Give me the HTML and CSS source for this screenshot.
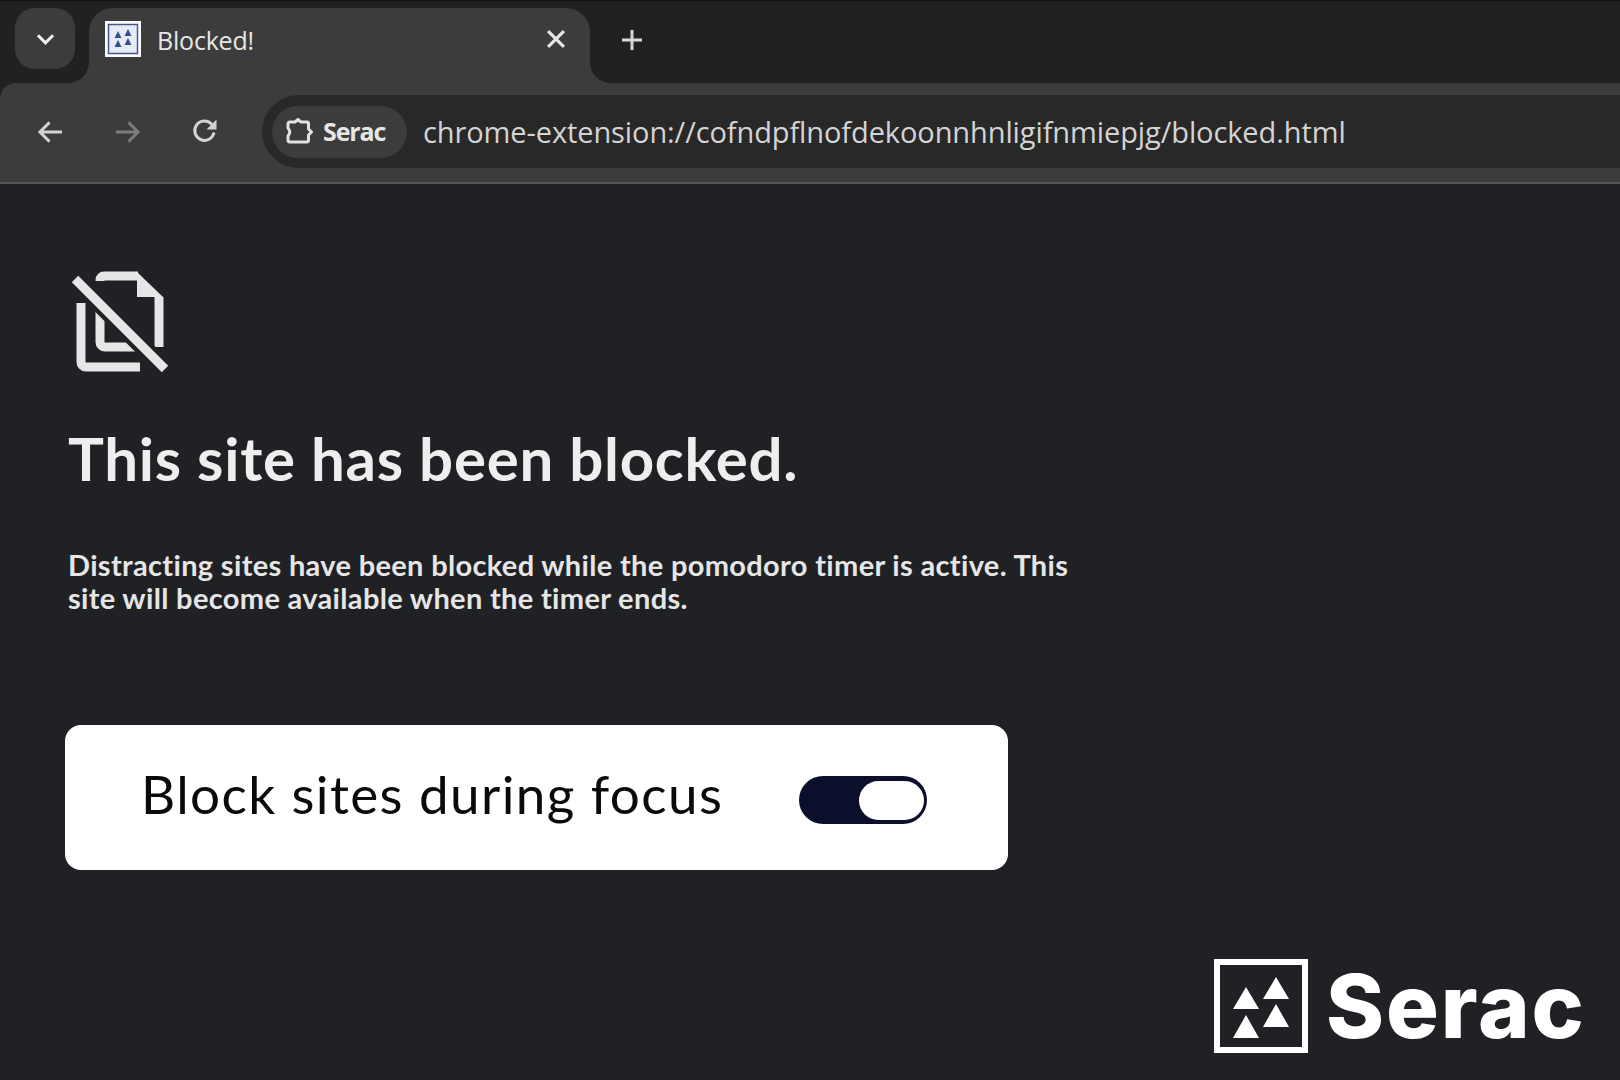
FILE: index.html
```html
<!DOCTYPE html>
<html lang="en">
<head>
<meta charset="utf-8">
<title>Blocked!</title>
<link rel="stylesheet" href="styles.css">
</head>
<body>
<header class="chrome">
  <div class="tabstrip">
    <div class="tab-search">
      <svg class="chev" viewBox="0 0 20 12"><path d="M2 2l8 8 8-8"/></svg>
    </div>
    <div class="tab">
      <svg class="favicon" viewBox="0 0 36 36">
        <rect width="36" height="36" fill="#fff"/>
        <rect x="3.5" y="3.500" width="29" height="29" fill="#e8ebf3" stroke="#44558f" stroke-width="1.500"/>
        <path d="M13 10l3.500 7h-7zM23 8l3.500 7h-7zM13 19l3.500 7h-7zM23 17l3.500 7h-7z" fill="#34508f"/>
      </svg>
      <span class="tab-title">Blocked!</span>
      <svg class="close" viewBox="0 0 16 16"><path d="M1 1l14 14M15 1L1 15"/></svg>
    </div>
    <svg class="plus" viewBox="0 0 22 22"><path d="M11 1v20M1 11h20"/></svg>
  </div>
  <div class="toolbar">
    <svg class="nav" viewBox="0 0 28 24"><path d="M26 12H3M13 2L3 12l10 10"/></svg>
    <svg class="nav nav-off" viewBox="0 0 28 24"><path d="M2 12h23M15 2l10 10-10 10"/></svg>
    <svg class="nav nav-reload" viewBox="0 0 28 28"><path d="M23 15.500A9.700 9.700 0 1 1 20.500 7L24 10.500"/><path class="fill" d="M25.500 2.500v10h-10z"/></svg>
    <div class="omnibox">
      <div class="chip">
        <svg class="puzzle" viewBox="0 0 30 30"><path d="M7 5h5l3-2.500L18 5h6a1.500 1.500 0 0 1 1.500 1.500V12l3 3-3 3v5.500A1.500 1.500 0 0 1 24 25H7a2 2 0 0 1-2-2v-4q3.500-4 0-8V7a2 2 0 0 1 2-2z"/></svg>
        <span class="chip-name">Serac</span>
      </div>
      <span class="url">chrome-extension://cofndpflnofdekoonnhnligifnmiepjg/blocked.html</span>
    </div>
  </div>
</header>
<main class="page">
  <svg class="block-icon" viewBox="0 0 100 110">
    <path class="doc-fill" d="M67 3l26 25H67z"/>
    <path class="doc" d="M30 12V11a4 4 0 0 1 4-4h34M89 28v50M30 38v35a5 5 0 0 0 5 5h32"/>
    <path class="doc" d="M11 34v59a5 5 0 0 0 5 5h54"/>
    <path class="slash-gap" d="M5 10l90 90"/>
    <path class="slash" d="M5 10l90 90"/>
  </svg>
  <h1 class="headline">This site has been blocked.</h1>
  <p class="message">Distracting sites have been blocked while the pomodoro timer is active. This site will become available when the timer ends.</p>
  <section class="card">
    <span class="card-label">Block sites during focus</span>
    <span class="toggle"><span class="knob"></span></span>
  </section>
</main>
<div class="brand">
  <svg class="brand-mark" viewBox="0 0 94 94">
    <rect x="3" y="3" width="88" height="88" fill="none" stroke="#fff" stroke-width="6"/>
    <path d="M62 18l13 22H49zM32 28l13 22H19zM62 45l13 23H49zM32 56l13 23H19z" fill="#fff"/>
  </svg>
  <span class="brand-name">Serac</span>
</div>
</body>
</html>
```
FILE: styles.css
```css
* { box-sizing: border-box; }
html, body { margin: 0; height: 100%; }
body {
  background: #202125;
  color: #e8e8e8;
  overflow: hidden;
  position: relative;
  font-family: "Open Sans", "Liberation Sans", sans-serif;
}
.chrome { display: flex; flex-direction: column; }
.tabstrip {
  height: 83px;
  background: #202221;
  border-top: 1px solid #111;
  padding: 7px 0 0 15px;
  display: flex;
  align-items: flex-start;
}
.tab-search {
  width: 60px;
  height: 61px;
  border-radius: 20px;
  background: #3c3c3c;
  display: flex;
  align-items: center;
  justify-content: center;
  margin-right: 14px;
}
.chev { width: 19px; height: 12px; fill: none; stroke: #f2f2f2; stroke-width: 3.200; }
.tab {
  position: relative;
  width: 501px;
  height: 75px;
  background: #3c3c3c;
  border-radius: 24px 24px 0 0;
  padding: 13px 26px 0 16px;
  display: flex;
  align-items: flex-start;
}
.tab::before, .tab::after {
  content: "";
  position: absolute;
  bottom: 0;
  width: 20px;
  height: 20px;
}
.tab::before { left: -20px; background: radial-gradient(circle at 0 0, transparent 19.500px, #3c3c3c 20px); }
.tab::after { right: -20px; background: radial-gradient(circle at 100% 0, transparent 19.500px, #3c3c3c 20px); }
.favicon { width: 36px; height: 36px; flex: none; }
.tab-title {
  margin-left: 16px;
  font-size: 25px;
  line-height: 38px;
  color: #e6e6e6;
  font-family: "Open Sans", sans-serif;
  letter-spacing: -0.2px;
  flex: 1;
}
.close { width: 18px; height: 18px; margin-top: 9px; margin-right: -1px; fill: none; stroke: #e6e6e6; stroke-width: 2.800; }
.plus { width: 22px; height: 22px; margin: 21px 0 0 31px; fill: none; stroke: #d8d8d8; stroke-width: 3; }
.toolbar {
  position: relative;
  height: 101px;
  background: #3c3c3c;
  border-bottom: 2px solid #555;
  border-radius: 16px 0 0 0;
  padding: 12px 0 14px 37px;
  display: flex;
  align-items: center;
}
.nav { width: 27px; height: 24px; flex: none; margin-right: 50px; fill: none; stroke: #d4d4d4; stroke-width: 3; }
.nav-off { stroke: #7d7d7d; margin-right: 50px; }
.nav-reload { width: 28px; height: 28px; margin-right: 43px; margin-top: -1px; }
.nav-reload .fill { fill: #d4d4d4; stroke: none; }
.omnibox {
  flex: 1;
  height: 73px;
  background: #282828;
  border-radius: 37px 0 0 37px;
  padding-left: 10px;
  display: flex;
  align-items: center;
}
.chip {
  width: 135px;
  height: 52px;
  background: #3c3c3c;
  border-radius: 26px;
  padding-left: 11px;
  display: flex;
  align-items: center;
  flex: none;
}
.puzzle { width: 30px; height: 30px; fill: none; stroke: #e2e2e2; stroke-width: 3; stroke-linejoin: round; flex: none; }
.chip-name { margin-left: 10px; font-size: 25px; font-weight: 700; color: #e6e6e6; letter-spacing: -1.1px; margin-top: -2px; }
.url { margin-left: 16px; font-size: 29px; color: #d4d4d4; white-space: nowrap; letter-spacing: -0.1px; }
.page { padding: 85px 0 0 68px; }
.block-icon { display: block; width: 100px; height: 110px; margin-left: 2px; overflow: visible; }
.doc-fill { fill: #e6e6e6; }
.doc { fill: none; stroke: #e6e6e6; stroke-width: 9; }
.slash { fill: none; stroke: #e6e6e6; stroke-width: 9; }
.slash-gap { fill: none; stroke: #202125; stroke-width: 18; }
.headline {
  margin: 43px 0 0;
  font-family: Lato, sans-serif;
  font-size: 60px;
  font-weight: 700;
  line-height: 72px;
  letter-spacing: 0.72px;
  color: #eeeeee;
}
.message {
  margin: 55px 0 0;
  width: 1030px;
  font-family: Lato, sans-serif;
  font-size: 29px;
  font-weight: 700;
  line-height: 32.500px;
  letter-spacing: 0.33px;
  color: #e6e6e6;
}
.card {
  margin: 111px 0 0 -3px;
  width: 943px;
  height: 145px;
  background: #fff;
  border-radius: 16px;
  padding: 4px 81px 0 76px;
  display: flex;
  align-items: center;
  justify-content: space-between;
}
.card-label { font-family: Lato, sans-serif; font-size: 53px; color: #0a0a0a; white-space: nowrap; letter-spacing: 1.400px; margin-top: -12px; }
.toggle {
  width: 128px;
  height: 48px;
  border-radius: 24px;
  background: #0b0f2b;
  padding: 5px 3px 4px 60px;
  display: block;
  flex: none;
}
.knob { display: block; height: 39px; border-radius: 20px; background: #fff; }
.brand {
  position: absolute;
  left: 1214px;
  top: 959px;
  display: flex;
  align-items: center;
  gap: 18px;
}
.brand-mark { width: 94px; height: 94px; flex: none; }
.brand-name {
  font-family: Inter, sans-serif;
  font-size: 88px;
  line-height: 94px;
  font-weight: 800;
  letter-spacing: 1.900px;
  color: #fff;
}
```
